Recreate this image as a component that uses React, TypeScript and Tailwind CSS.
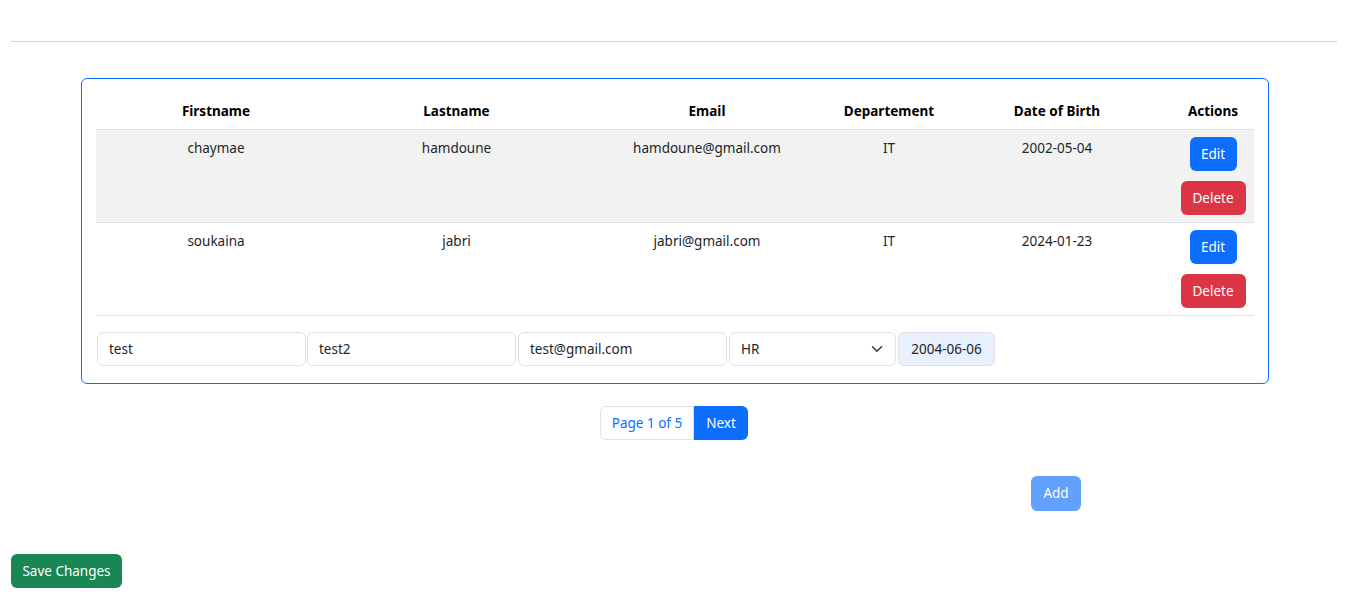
import React from "react";

const rows = [
  { first: "chaymae", last: "hamdoune", email: "hamdoune@gmail.com", dept: "IT", dob: "2002-05-04", bg: "bg-[#f2f2f2]" },
  { first: "soukaina", last: "jabri", email: "jabri@gmail.com", dept: "IT", dob: "2024-01-23", bg: "bg-white" },
];

const cols = ["w-[240px]", "w-[241px]", "w-[260px]", "w-[104px]", "w-[232px]", "w-[80px]"];

export default function App() {
  return (
    <div className="min-h-[599px] bg-white pl-[11px] pr-[10px] text-[#212529] text-[13.5px]" style={{ fontFamily: '"Noto Sans", "Open Sans", sans-serif' }}>
      <div className="h-[41px]" />
      <div className="h-px bg-[#d1d1d1]" />

      <div className="ml-[70px] mt-[36px] w-[1188px] rounded-[6px] border border-[#0d6efd] px-[14px] pt-[14px] pb-[17px]">
        {/* Header */}
        <div className="flex h-[37px] items-center border-b border-[#dee2e6] font-bold text-black">
          {["Firstname", "Lastname", "Email", "Departement", "Date of Birth", "Actions"].map((h, i) => (
            <div key={h} className={`${cols[i]} text-center`}>
              {h}
            </div>
          ))}
        </div>

        {/* Rows */}
        {rows.map((r) => (
          <div key={r.email} className={`flex h-[93px] border-b border-[#dee2e6] ${r.bg}`}>
            {[r.first, r.last, r.email, r.dept, r.dob].map((v, i) => (
              <div key={i} className={`${cols[i]} pt-[8px] text-center leading-[20px]`}>
                {v}
              </div>
            ))}
            <div className={`${cols[5]} flex flex-col items-center gap-[10px] pt-[7px]`}>
              <button className="h-[34px] w-[47px] rounded-[6px] bg-[#0d6efd] text-white">Edit</button>
              <button className="h-[34px] w-[65px] rounded-[6px] bg-[#dc3545] text-white">Delete</button>
            </div>
          </div>
        ))}

        {/* New row inputs */}
        <div className="mt-[16px] flex items-center gap-[1px] pl-px">
          <div className="flex h-[34px] w-[209px] items-center rounded-[6px] border border-[#dee2e6] px-[11px]">test</div>
          <div className="flex h-[34px] w-[209px] items-center rounded-[6px] border border-[#dee2e6] px-[11px]">test2</div>
          <div className="ml-px flex h-[34px] w-[209px] items-center rounded-[6px] border border-[#dee2e6] px-[11px]">test@gmail.com</div>
          <div className="ml-px flex h-[34px] w-[167px] items-center justify-between rounded-[6px] border border-[#dee2e6] pl-[11px] pr-[12px]">
            <span>HR</span>
            <svg width="12" height="12" viewBox="0 0 16 16" fill="none" stroke="#343a40" strokeWidth="2" strokeLinecap="round" strokeLinejoin="round">
              <path d="m2 5 6 6 6-6" />
            </svg>
          </div>
          <div className="ml-px flex h-[34px] w-[97px] items-center justify-center whitespace-nowrap rounded-[6px] border border-[#dee2e6] bg-[#e8f0fe]">2004-06-06</div>
        </div>
      </div>

      {/* Pagination */}
      <div className="mt-[22px] flex justify-center">
        <div className="flex h-[34px]">
          <div className="flex w-[94px] items-center justify-center rounded-l-[6px] border border-[#dee2e6] text-[#0d6efd]">Page 1 of 5</div>
          <div className="flex w-[54px] items-center justify-center rounded-r-[6px] bg-[#0d6efd] text-white">Next</div>
        </div>
      </div>

      <div className="mt-[36px] flex">
        <button className="ml-[1020px] h-[35px] w-[50px] rounded-[6px] bg-[#0d6efd] text-white opacity-65">Add</button>
      </div>

      <div className="mt-[43px]">
        <button className="h-[34px] w-[111px] rounded-[6px] bg-[#198754] text-white">Save Changes</button>
      </div>
    </div>
  );
}
